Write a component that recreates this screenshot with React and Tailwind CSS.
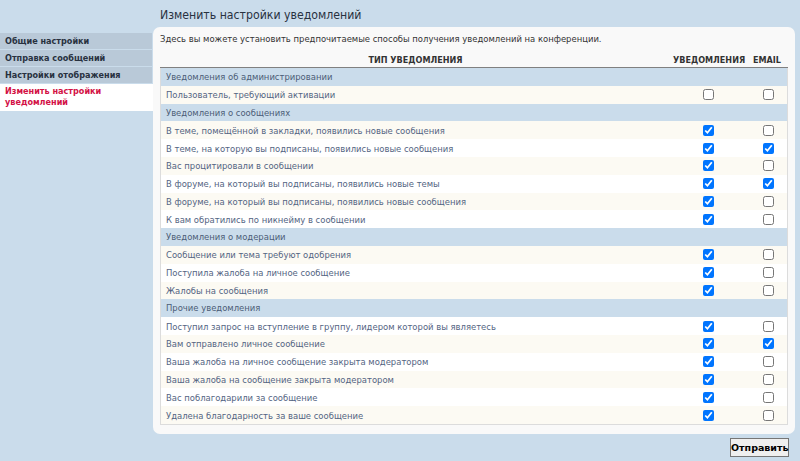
import React from "react";

const groups = [
  {
    title: "Уведомления об администрировании",
    rows: [["Пользователь, требующий активации", false, false]],
  },
  {
    title: "Уведомления о сообщениях",
    rows: [
      ["В теме, помещённой в закладки, появились новые сообщения", true, false],
      ["В теме, на которую вы подписаны, появились новые сообщения", true, true],
      ["Вас процитировали в сообщении", true, false],
      ["В форуме, на который вы подписаны, появились новые темы", true, true],
      ["В форуме, на который вы подписаны, появились новые сообщения", true, false],
      ["К вам обратились по никнейму в сообщении", true, false],
    ],
  },
  {
    title: "Уведомления о модерации",
    rows: [
      ["Сообщение или тема требуют одобрения", true, false],
      ["Поступила жалоба на личное сообщение", true, false],
      ["Жалобы на сообщения", true, false],
    ],
  },
  {
    title: "Прочие уведомления",
    rows: [
      ["Поступил запрос на вступление в группу, лидером которой вы являетесь", true, false],
      ["Вам отправлено личное сообщение", true, true],
      ["Ваша жалоба на личное сообщение закрыта модератором", true, false],
      ["Ваша жалоба на сообщение закрыта модератором", true, false],
      ["Вас поблагодарили за сообщение", true, false],
      ["Удалена благодарность за ваше сообщение", true, false],
    ],
  },
];

function Box({ checked }) {
  return (
    <input
      type="checkbox"
      defaultChecked={checked}
      className="m-0 w-[11px] h-[11px] accent-[#0075ff]"
    />
  );
}

const navCls =
  "w-[152px] h-[16px] bg-[#b9c9d8] pl-[5px] text-[9px] leading-[16px] font-bold text-[#28313f]";

export default function App() {
  let idx = 0;
  return (
    <div
      className="w-[800px] h-[461px] bg-[#cadceb] flex flex-col overflow-hidden"
      style={{ fontFamily: '"DejaVu Sans Condensed", "DejaVu Sans", Verdana, sans-serif' }}
    >
      <div className="h-[27px] pl-[160px] pt-[7px] text-[12.2px] leading-[16px] text-[#28313f]">
        Изменить настройки уведомлений
      </div>
      <div className="flex flex-1 min-h-0">
        <div className="w-[153px] pt-[6px] flex flex-col gap-[1px] shrink-0">
          <div className={navCls}>Общие настройки</div>
          <div className={navCls}>Отправка сообщений</div>
          <div className={navCls}>Настройки отображения</div>
          <div className="w-[153px] h-[27px] bg-white pl-[5px] pt-[2px] text-[9px] leading-[11px] font-bold text-[#d31145]">
            Изменить настройки
            <br />
            уведомлений
          </div>
        </div>
        <div className="w-[642px] h-[407px] bg-[#f9f9f9] rounded-[7px] px-[7px] pt-[6px] flex flex-col">
          <div className="text-[9.4px] leading-[12px] text-[#333333] h-[20px]">
            Здесь вы можете установить предпочитаемые способы получения уведомлений на конференции.
          </div>
          <div className="flex h-[15px] border-b border-[#808080] text-[9px] font-bold text-[#333333] leading-[14px]">
            <div className="flex-1 text-center">ТИП УВЕДОМЛЕНИЯ</div>
            <div className="w-[73px] text-center pl-[2px]">УВЕДОМЛЕНИЯ</div>
            <div className="w-[44px] text-center pl-[2px]">EMAIL</div>
          </div>
          <div className="border-x border-b border-[#dcdcdc]">
            {groups.map((g) => (
              <div key={g.title}>
                <div className="h-[17.8px] bg-[#cadceb] pl-[5px] text-[9.4px] leading-[17.8px] text-[#4c5d77]">
                  {g.title}
                </div>
                {g.rows.map((r) => {
                  idx++;
                  const cream = g.title === "Уведомления об администрировании" ? true : idx % 2 === 0;
                  return (
                    <div
                      key={r[0]}
                      className={`flex items-center h-[17.8px] text-[9.4px] text-[#536482] ${
                        cream ? "bg-[#fcfaf3]" : "bg-white"
                      }`}
                    >
                      <div className="flex-1 pl-[5px] leading-[17px]">{r[0]}</div>
                      <div className="w-[73px] flex justify-center pl-[4px]">
                        <Box checked={r[1]} />
                      </div>
                      <div className="w-[44px] flex justify-center pl-[6px]">
                        <Box checked={r[2]} />
                      </div>
                    </div>
                  );
                })}
              </div>
            ))}
          </div>
        </div>
      </div>
      <div className="h-[27px] flex justify-end items-start pr-[11px] pt-[4px]">
        <button
          className="h-[19px] w-[59px] bg-[#efefef] border border-[#767676] text-[9.5px] font-bold text-black leading-[17px] p-0"
          style={{ fontFamily: '"DejaVu Sans", Verdana, sans-serif' }}
        >
          Отправить
        </button>
      </div>
    </div>
  );
}
